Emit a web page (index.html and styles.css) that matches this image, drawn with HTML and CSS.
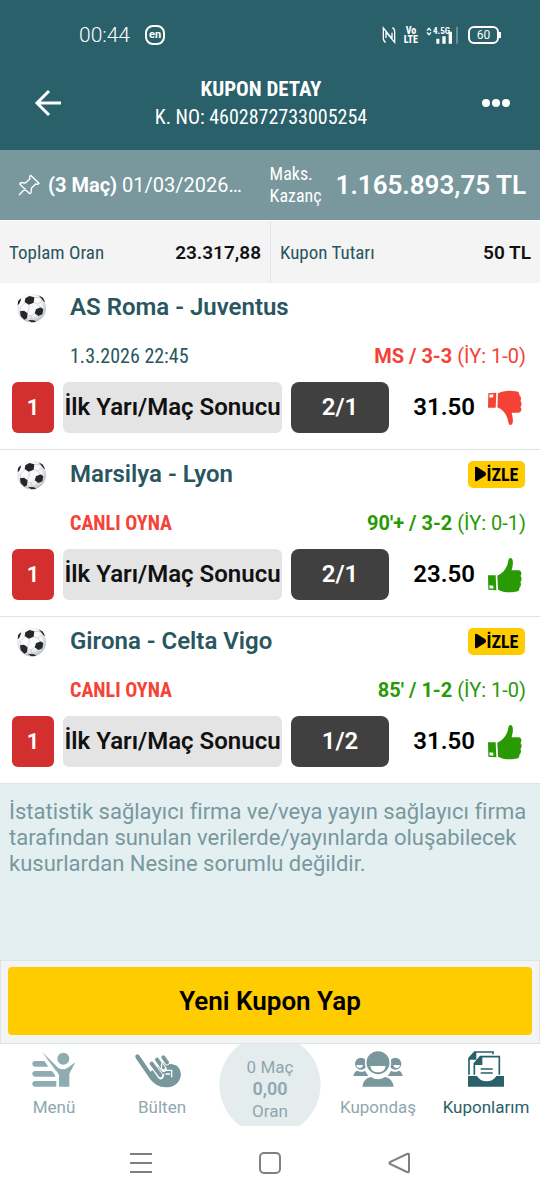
FILE: index.html
```html
<!DOCTYPE html>
<html lang="tr">
<head>
<meta charset="utf-8">
<meta name="viewport" content="width=device-width, initial-scale=1">
<title>Kupon Detay</title>
<link rel="stylesheet" href="styles.css">
</head>
<body>
<svg class="defs" aria-hidden="true">
  <defs>
    <radialGradient id="shade" cx=".45" cy=".4" r=".6"><stop offset=".6" stop-color="#fafafa"/><stop offset="1" stop-color="#bcbfc3"/></radialGradient>
    <symbol id="ball" viewBox="50 38 96 96">
      <circle cx="97" cy="86" r="43" fill="url(#shade)"/>
      <path d="M78 57l12-7 15 4-2 16-15 6-12-8zM62 96l12-2 11 8-2 15-8 4-11-11zM110 90l14-6 8 6-3 15-12 5-11-8zM55 78l1-12 8-9 1 4-5 12zM118 48l13 7 6 13-3-1-10-12zM86 122l18 1 7 5-15 1z" fill="#23272b"/>
      <path d="M77 70L62 84l4 11M90 76l-1 14-6 12M103 70l12 4 8 11M106 102l-9 7-12 0M96 109l2 13M105 54l17 1M115 74l13-8M134 92l5 2" fill="none" stroke="#bfc3c7" stroke-width="2"/>
    </symbol>
    <symbol id="thumb" viewBox="650 318 105 108">
      <path d="M681 374C696 368 706 356 711 342C715 328 714 321 721 321C730 324 729 338 724 358H744C755 359 755 371 750 375C756 380 754 390 750 393C754 399 751 408 747 410C748 419 743 422 735 422C715 426 697 423 683 416Z"/>
      <path fill-rule="evenodd" d="M653 373L676 373L678 418L654 416ZM658 403L657 412L669 413L669 404Z"/>
    </symbol>
  </defs>
</svg>

<header class="top">
  <div class="status">
    <div class="status-side">
      <span class="clock">00:44</span>
      <span class="lang">en</span>
    </div>
    <div class="status-side status-right">
      <svg width="14" height="18" viewBox="338 78 42 54" fill="none" stroke="#fff" stroke-width="4"><path d="M349 127q-7-3-7-13V84l26 32V98M369 83q7 3 7 13v31l-26-31v18"/></svg>
      <span class="volte">Vo<br>LTE</span>
      <span class="signal"><svg width="32" height="18" viewBox="468 76 96 54" fill="#fff"><path d="M499 114h9v15h-9zM517 107h10v22h-10zM536 93h10v36h-10z"/><path d="M558 78h6v51h-6z" opacity=".3"/><path d="M471 90l6-7 6 7M471 95l6 7 6-7" fill="none" stroke="#fff" stroke-width="4"/></svg><span class="gen">4.5G</span></span>
      <span class="battery">60</span>
    </div>
  </div>
  <div class="titlebar">
    <button class="back" aria-label="Geri"><svg width="28" height="28" viewBox="0 0 28 28" fill="none" stroke="#fff" stroke-width="3"><path d="M15 2L3 14l12 12M3 14h24"/></svg></button>
    <div class="heading">
      <h1>KUPON DETAY</h1>
      <p>K. NO: 4602872733005254</p>
    </div>
    <button class="more" aria-label="Diğer"><svg width="28" height="8" viewBox="0 0 28 8" fill="#fff"><circle cx="4" cy="4" r="4"/><circle cx="14" cy="4" r="4"/><circle cx="24" cy="4" r="4"/></svg></button>
  </div>
</header>

<section class="summary">
  <svg width="22" height="22" viewBox="54 88 66 66" fill="none" stroke="#fff" stroke-width="4" stroke-linejoin="round"><path d="M57 151l20-20M92 92l25 24-5 3-5-1-13 13-1 14-4 2-30-29 3-4 14 1 14-13-1-6z"/></svg>
  <p class="coupon-date"><b>(3 Maç)</b> 01/03/2026…</p>
  <p class="max-label">Maks.<br>Kazanç</p>
  <strong class="max-win">1.165.893,75 TL</strong>
</section>

<section class="totals">
  <div class="total"><span>Toplam Oran</span><strong>23.317,88</strong></div>
  <div class="total"><span>Kupon Tutarı</span><strong>50 TL</strong></div>
</section>

<main class="content">
  <article class="match">
    <svg class="ball"><use href="#ball"/></svg>
    <h2>AS Roma - Juventus</h2>
    <p class="when">1.3.2026 22:45</p>
    <p class="score lost"><b>MS / 3-3</b> (İY: 1-0)</p>
    <div class="bet">
      <span class="mbs">1</span><span class="market">İlk Yarı/Maç Sonucu</span><span class="pick">2/1</span><strong class="odds">31.50</strong>
      <svg class="thumb down"><use href="#thumb"/></svg>
    </div>
  </article>
  <article class="match">
    <svg class="ball"><use href="#ball"/></svg>
    <h2>Marsilya - Lyon</h2>
    <button class="watch"><svg width="11" height="16" viewBox="0 0 11 16"><path d="M0 2q0-2 2-1l8 5q2 2 0 4l-8 5q-2 1-2-1z"/></svg>İZLE</button>
    <a class="when live" href="#">CANLI OYNA</a>
    <p class="score won"><b>90'+ / 3-2</b> (İY: 0-1)</p>
    <div class="bet">
      <span class="mbs">1</span><span class="market">İlk Yarı/Maç Sonucu</span><span class="pick">2/1</span><strong class="odds">23.50</strong>
      <svg class="thumb"><use href="#thumb"/></svg>
    </div>
  </article>
  <article class="match">
    <svg class="ball"><use href="#ball"/></svg>
    <h2>Girona - Celta Vigo</h2>
    <button class="watch"><svg width="11" height="16" viewBox="0 0 11 16"><path d="M0 2q0-2 2-1l8 5q2 2 0 4l-8 5q-2 1-2-1z"/></svg>İZLE</button>
    <a class="when live" href="#">CANLI OYNA</a>
    <p class="score won"><b>85' / 1-2</b> (İY: 1-0)</p>
    <div class="bet">
      <span class="mbs">1</span><span class="market">İlk Yarı/Maç Sonucu</span><span class="pick">1/2</span><strong class="odds">31.50</strong>
      <svg class="thumb"><use href="#thumb"/></svg>
    </div>
  </article>
  <p class="note">İstatistik sağlayıcı firma ve/veya yayın sağlayıcı firma tarafından sunulan verilerde/yayınlarda oluşabilecek kusurlardan Nesine sorumlu değildir.</p>
</main>

<div class="action"><button class="new-coupon">Yeni Kupon Yap</button></div>

<nav class="tabs">
  <a class="tab" href="#">
    <svg width="44" height="37" viewBox="98 48 132 111" fill="#8fadb0"><circle cx="192" cy="71" r="18"/><path d="M128 50L176 98Q190 107 204 99L228 82L210 116V155H179V120Q176 112 168 105ZM108 78H135L147 95H108Q99 94 99 86Q99 79 108 78ZM108 108H157Q165 114 169 125H108Q99 124 99 116Q99 109 108 108ZM108 138H171V155H108Q99 154 99 146Q99 139 108 138Z"/></svg>
    Menü
  </a>
  <a class="tab" href="#">
    <svg class="hand" width="46" height="37" viewBox="404 50 138 111" fill="none" stroke-linecap="round"><path d="M411 66L456 132" stroke="#78989e" stroke-width="12"/><path d="M406 71L448 132Q466 159 497 159Q536 158 542 121Q540 92 516 90L490 85L450 112L416 62Z" fill="#78989e"/><path d="M489 69L500 84M470 76L490 104M454 88L481 126" stroke="#fff" stroke-width="18"/><path d="M489 69L500 84M470 76L488 101M454 88L481 124" stroke="#78989e" stroke-width="12"/><path d="M484 89Q480 106 492 108H514V127M497 119L508 119M478 132Q488 130 490 120" stroke="#fff" stroke-width="4"/></svg>
    Bülten
  </a>
  <a class="tab slip" href="#"><span>0 Maç</span><b>0,00</b><span>Oran</span></a>
  <a class="tab" href="#">
    <svg width="50" height="37" viewBox="248 48 150 111" fill="#78989e"><circle cx="272" cy="86" r="18"/><circle cx="375" cy="86" r="18"/><path d="M249 123Q252 108 262 107Q272 114 284 107L294 123ZM352 123L363 107Q374 114 385 107Q394 108 397 123Z"/><path d="M258 90h20q-1 9-10 9t-10-9zM369 90h20q-1 9-10 9t-10-9z" fill="#fff"/><circle cx="323" cy="83" r="37" stroke="#fff" stroke-width="5"/><path d="M300 93h46q-3 19-23 19t-23-19z" fill="#fff"/><path d="M276 155Q280 129 302 126Q323 140 344 126Q366 129 370 155Z"/></svg>
    Kupondaş
  </a>
  <a class="tab current" href="#" aria-current="page">
    <svg width="36" height="37" viewBox="594 48 108 111" fill="none" stroke="#29606a" stroke-width="5"><path d="M597 119V70L614 51H669V58M613 119V86L631 65H688V119M632 102H668M632 114H668"/><path d="M594 123H621Q630 139 650 139T679 123H702V155H594ZM597 70L614 51H619V74H597M613 86L631 65H637V90H613" fill="#29606a" stroke="none"/></svg>
    Kuponlarım
  </a>
</nav>

<footer class="system">
  <button aria-label="Son uygulamalar"><svg width="22" height="22" viewBox="0 0 22 22"><path d="M0 2h22M0 11h22M0 20h22"/></svg></button>
  <button aria-label="Ana ekran"><svg width="22" height="22" viewBox="0 0 22 22"><rect x="1" y="1" width="20" height="20" rx="4"/></svg></button>
  <button aria-label="Geri dön"><svg width="22" height="22" viewBox="0 0 22 22"><path d="M19 2L2 10q-1 1 0 2l17 8q2 1 2-1V3q0-2-2-1z"/></svg></button>
</footer>
</body>
</html>
```

FILE: styles.css
```css
* { box-sizing: border-box; }
body {
  margin: 0;
  min-height: 100vh;
  display: flex;
  flex-direction: column;
  background: #fff;
  color: #29565f;
  font-family: Roboto, "Liberation Sans", sans-serif;
  font-size: 20px;
}
h1, h2, p { margin: 0; }
a { color: inherit; text-decoration: none; }
button { border: 0; padding: 0; background: none; color: inherit; font: inherit; }
svg { display: block; flex: none; }
.defs { position: absolute; width: 0; height: 0; }

.top { background: #29606a; color: #fff; padding-top: 20px; }
.status { display: flex; justify-content: space-between; padding: 0 41px 0 79px; height: 30px; }
.status-side { display: flex; align-items: center; gap: 15px; }
.status-right { gap: 8px; }
.clock { font-size: 21px; font-weight: 300; }
.lang { width: 20px; height: 20px; border: 2px solid #fff; border-radius: 8px; font-size: 11px; line-height: 15px; font-weight: 700; text-align: center; }
.volte { font-family: "Roboto Condensed", Roboto, sans-serif; font-size: 10px; line-height: 9px; font-weight: 800; text-align: center; }
.signal { position: relative; }
.gen { position: absolute; left: 7px; top: 0; font-family: "Roboto Condensed", Roboto, sans-serif; font-size: 9px; line-height: 10px; font-weight: 700; }
.battery { position: relative; width: 31px; height: 18px; margin-left: 2px; border: 2px solid #fff; border-radius: 6px; font-size: 12px; line-height: 14px; text-align: center; }
.battery::after { content: ""; position: absolute; right: -4px; top: 4px; width: 2px; height: 6px; background: #fff; }
.titlebar { display: grid; grid-template-columns: 1fr auto 1fr; align-items: center; height: 100px; padding: 6px 30px 0 12px; }
.back { justify-self: start; padding-left: 22px; }
.more { justify-self: end; }
.heading { text-align: center; font-family: "Roboto Condensed", "Liberation Sans Narrow", Roboto, sans-serif; font-size: 20px; line-height: 28px; }
.heading h1 { font-size: 21px; line-height: 28px; font-weight: 700; }

.summary { display: flex; align-items: center; height: 70px; padding: 0 14px 0 18px; background: #78989e; color: #fff; }
.coupon-date { margin-left: 8px; white-space: nowrap; }
.max-label { margin-left: auto; font-family: "Roboto Condensed", "Liberation Sans Narrow", Roboto, sans-serif; font-size: 18px; line-height: 22px; }
.max-win { margin-left: 14px; font-size: 26px; font-weight: 600; white-space: nowrap; }

.totals { display: grid; grid-template-columns: 1fr 1fr; height: 63px; border-top: 1px solid #fff; background: #f4f4f4; }
.total { display: flex; align-items: center; justify-content: space-between; padding: 0 9px; }
.total + .total { border-left: 1px solid #e2e4e5; }
.total span { font-family: "Roboto Condensed", "Liberation Sans Narrow", Roboto, sans-serif; font-size: 19px; }
.total strong { color: #111; font-size: 19px; font-weight: 600; }

.content { flex: 1; display: flex; flex-direction: column; }
.match { display: grid; grid-template-columns: 58px 1fr auto; grid-template-rows: 48px 51px 51px; padding: 0 14px 16px 12px; border-bottom: 1px solid #dbe4e9; }
.ball { width: 32px; height: 32px; margin: 9px 0 0 4px; }
.match h2 { font-size: 24px; line-height: 48px; font-weight: 600; }
.watch { display: flex; align-items: center; justify-content: center; gap: 1px; align-self: center; justify-self: end; width: 57px; height: 27px; margin-right: 1px; border-radius: 5px; background: #fc0; color: #000; font-size: 18px; font-weight: 700; font-family: "Roboto Condensed", "Liberation Sans Narrow", Roboto, sans-serif; }
.when { grid-column: 2; font-family: "Roboto Condensed", "Liberation Sans Narrow", Roboto, sans-serif; line-height: 50px; }
.live { color: #f44336; font-weight: 700; }
.score { grid-column: 3; line-height: 50px; text-align: right; }
.lost { color: #f44336; }
.won { color: #299a04; }
.bet { grid-column: 1 / -1; display: grid; grid-template-columns: 42px 219px 98px 1fr 35px; column-gap: 9px; align-items: center; padding-right: 4px; font-weight: 600; text-align: center; line-height: 51px; }
.mbs { border-radius: 6px; background: #d32f2f; color: #fff; font-size: 22px; }
.market { border-radius: 6px; background: #e4e4e4; color: #111; font-size: 24px; white-space: nowrap; }
.pick { border-radius: 8px; background: #404040; color: #fff; font-size: 24px; }
.odds { color: #000; font-size: 24px; font-weight: 600; text-align: right; padding-right: 3px; }
.thumb { width: 35px; height: 36px; fill: #299a04; }
.down { fill: #f44336; transform: scaleY(-1); }

.note { flex: 1; padding: 15px 9px; background: #e4eff2; color: #78989e; font-size: 22px; line-height: 26px; }
.action { padding: 6px 7px 8px; border: 1px solid #dbe4e6; background: #f4f4f4; }
.new-coupon { display: block; width: 100%; height: 68px; border-radius: 4px; background: #fc0; color: #000; font-size: 26px; font-weight: 600; }

.tabs { display: grid; grid-template-columns: repeat(5, 1fr); height: 82px; color: #8ea7ae; font-size: 17px; }
.tab { display: flex; flex-direction: column; align-items: center; gap: 8px; padding-top: 7px; line-height: 22px; }
.hand { margin-right: 8px; }
.slip { gap: 0; padding-top: 12px; background: radial-gradient(circle at 50% 50%, #e5ecee 50px, transparent 51px); }
.slip b { font-size: 18px; font-weight: 600; }
.current { color: #29606a; }
.system { display: flex; justify-content: center; align-items: center; gap: 107px; height: 74px; }
.system svg { fill: none; stroke: #808080; stroke-width: 2; }
```
